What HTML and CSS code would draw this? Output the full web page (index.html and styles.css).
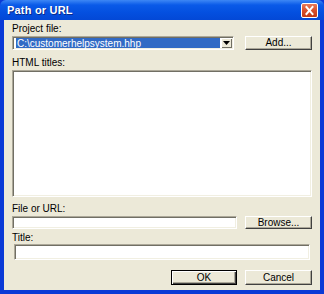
FILE: index.html
```html
<!DOCTYPE html>
<html>
<head>
<meta charset="utf-8">
<link rel="stylesheet" href="styles.css">
</head>
<body>
<div class="window">
  <div class="titlebar">
    <span class="title">Path or URL</span>
    <span class="close">
      <svg width="17" height="15" viewBox="0 0 17 15">
        <path d="M5 3.5 L12 11.5 M12 3.5 L5 11.5" stroke="#fff" stroke-width="2.2" stroke-linecap="square" fill="none"/>
      </svg>
    </span>
  </div>
  <div class="content">
    <div class="label l-project">Project file:</div>
    <div class="row r-project">
      <div class="combo sunken">
        <span class="sel">C:\customerhelpsystem.hhp</span>
        <span class="drop">
          <svg width="7" height="4" viewBox="0 0 7 4"><path d="M0 0 H7 L3.5 4 Z" fill="#000"/></svg>
        </span>
      </div>
      <div class="btn">Add...</div>
    </div>
    <div class="label l-html">HTML titles:</div>
    <div class="listbox sunken"></div>
    <div class="label l-file">File or URL:</div>
    <div class="row r-file">
      <div class="input file sunken"></div>
      <div class="btn">Browse...</div>
    </div>
    <div class="label l-title">Title:</div>
    <div class="input title-in sunken"></div>
    <div class="row r-buttons">
      <div class="btn default">OK</div>
      <div class="btn">Cancel</div>
    </div>
  </div>
</div>
</body>
</html>
```
FILE: styles.css
```css
html, body {
  margin: 0;
  padding: 0;
  background: #ece9d8;
}
body {
  font-family: "Liberation Sans", Arial, sans-serif;
  font-size: 10px;
  color: #000;
}
.window {
  width: 324px;
  height: 294px;
  box-sizing: border-box;
  display: flex;
  flex-direction: column;
  background: #0a3ad6;
}
.titlebar {
  height: 20px;
  flex: none;
  display: flex;
  align-items: center;
  justify-content: space-between;
  padding: 0 6px 0 7px;
  background: linear-gradient(180deg, #3d87f5 0%, #0a5ae8 25%, #0450e0 60%, #0348d6 100%);
  border-radius: 6px 6px 0 0;
}
.title {
  color: #fff;
  font-weight: bold;
  font-size: 11px;
  letter-spacing: 0.2px;
  text-shadow: 1px 1px 0 #0a2a8a;
}
.close {
  width: 17px;
  height: 15px;
  box-sizing: border-box;
  border: 1px solid #fff;
  border-radius: 2px;
  background: linear-gradient(180deg, #e87a5a 0%, #d9502c 50%, #c23a16 100%);
  display: flex;
  align-items: center;
  justify-content: center;
  margin-top: 1px;
}
.close svg { display: block; }
.content {
  flex: 1;
  margin: 0 4px 4px 4px;
  background: #ece9d8;
  padding: 0 8px 0 8px;
  display: flex;
  flex-direction: column;
}
.label {
  height: 13px;
  line-height: 13px;
  white-space: nowrap;
}
.l-project { margin-top: 2px; }
.l-html { margin-top: 6px; }
.l-file { margin-top: 5px; }
.l-title { margin-top: 2px; }
.row {
  display: flex;
  align-items: flex-start;
}
.r-project { margin-top: 1px; gap: 11px; }
.r-file { margin-top: 1px; gap: 8px; }
.r-buttons { margin-top: 10px; justify-content: flex-end; gap: 8px; }
.sunken {
  box-sizing: border-box;
  background: #fff;
  border-top: 1px solid #aca899;
  border-left: 1px solid #aca899;
  border-right: 1px solid #fff;
  border-bottom: 1px solid #fff;
  box-shadow: inset 1px 1px 0 #716f64, inset -1px -1px 0 #f1efe2;
}
.combo {
  width: 222px;
  height: 14px;
  display: flex;
  align-items: stretch;
  padding: 1px 1px 1px 3px;
}
.sel {
  flex: 1;
  background: #316ac5;
  color: #fff;
  display: flex;
  align-items: center;
  line-height: 11px;
  font-size: 10px;
  padding-left: 1px;
  white-space: nowrap;
  overflow: visible;
}
.drop {
  width: 11px;
  margin-left: 1px;
  box-sizing: border-box;
  background: #ece9d8;
  box-shadow: inset 1px 1px 0 #fff, inset -1px -1px 0 #716f64;
  display: flex;
  align-items: center;
  justify-content: center;
}
.drop svg { display: block; }
.btn {
  width: 67px;
  height: 14px;
  box-sizing: border-box;
  background: #ece9d8;
  border-top: 1px solid #fff;
  border-left: 1px solid #fff;
  border-right: 1px solid #404040;
  border-bottom: 1px solid #404040;
  box-shadow: inset -1px -1px 0 #aca899;
  display: flex;
  align-items: center;
  justify-content: center;
  line-height: 12px;
  white-space: nowrap;
}
.r-file .btn { height: 13px; }
.r-buttons .btn { height: 15px; }
.btn.default {
  width: 66px;
  border: 1px solid #000;
  box-shadow: inset 1px 1px 0 #fff, inset -1px -1px 0 #404040, inset -2px -2px 0 #aca899;
}
.listbox {
  height: 127px;
  width: 300px;
  margin-top: 1px;
}
.input.file {
  width: 225px;
  height: 13px;
}
.input.title-in {
  width: 296px;
  height: 16px;
  margin-left: 2px;
}
```
